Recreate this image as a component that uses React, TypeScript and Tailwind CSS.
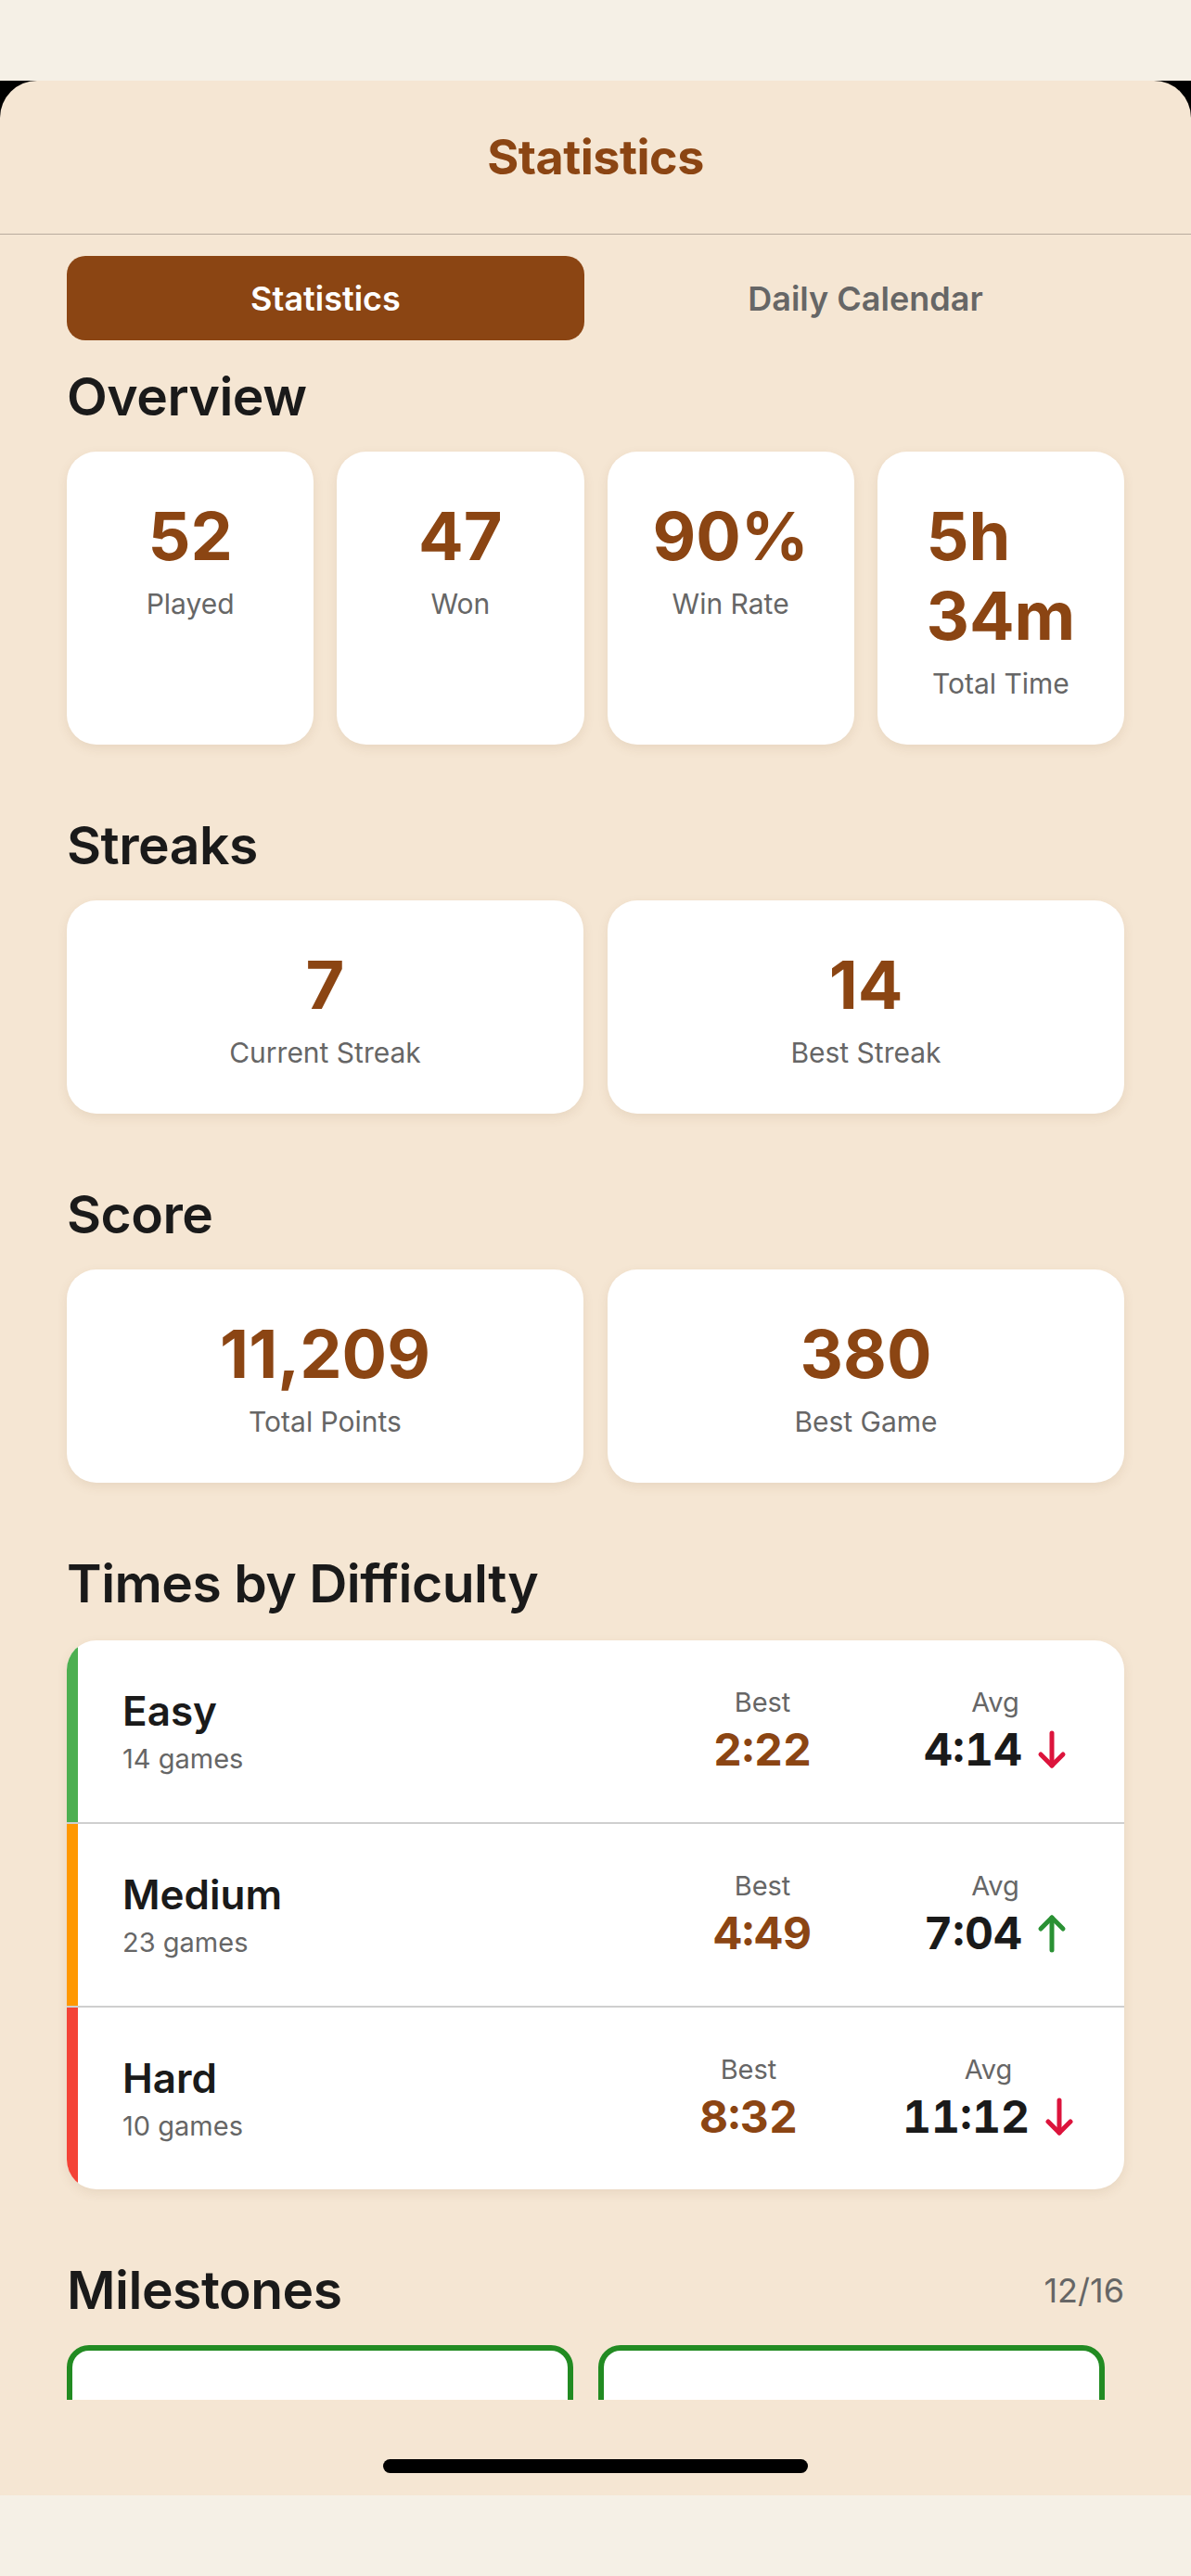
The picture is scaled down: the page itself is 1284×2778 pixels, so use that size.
import type { ReactNode } from 'react'

const overview = [
  { value: '52', label: 'Played' },
  { value: '47', label: 'Won' },
  { value: '90%', label: 'Win Rate' },
  { value: '5h 34m', label: 'Total Time' },
]

const streaks = [
  { value: '7', label: 'Current Streak' },
  { value: '14', label: 'Best Streak' },
]

const score = [
  { value: '11,209', label: 'Total Points' },
  { value: '380', label: 'Best Game' },
]

const difficulties = [
  { name: 'Easy', games: '14 games', best: '2:22', avg: '4:14', trend: 'down', border: 'border-[#4caf50]' },
  { name: 'Medium', games: '23 games', best: '4:49', avg: '7:04', trend: 'up', border: 'border-[#ff9800]' },
  { name: 'Hard', games: '10 games', best: '8:32', avg: '11:12', trend: 'down', border: 'border-[#f44336]' },
]

function Arrow({ up }: { up: boolean }) {
  return (
    <svg
      width="32"
      height="42"
      viewBox="0 0 32 42"
      fill="none"
      stroke={up ? '#2a9134' : '#dc143c'}
      strokeWidth="5"
      strokeLinecap="round"
      strokeLinejoin="round"
      className={up ? 'rotate-180' : ''}
    >
      <path d="M16 3v35" />
      <path d="M4 26l12 12 12-12" />
    </svg>
  )
}

function Heading({ children }: { children: ReactNode }) {
  return <h2 className="text-[57px] leading-[68px] font-semibold text-[#1a1a1a] tracking-[-0.5px]">{children}</h2>
}

function StatCard({ value, label, tall }: { value: string; label: string; tall?: boolean }) {
  return (
    <div className="flex-1 flex flex-col items-center bg-white rounded-[32px] px-6 py-12 shadow-[0_4px_12px_rgba(120,80,40,0.10)]">
      <div className={`text-[72px] leading-[86px] font-bold text-[#8b4513] ${tall ? 'w-min text-left' : 'text-center'}`}>
        {value}
      </div>
      <div className="mt-3 text-[30px] leading-[36px] text-[#666666] text-center">{label}</div>
    </div>
  )
}

export default function App() {
  return (
    <div className="w-[1284px] h-[2778px] flex flex-col bg-[#f5f0e6] font-['Inter',sans-serif]">
      <div className="h-[87px] shrink-0" />
      <div className="bg-black shrink-0">
        <div className="h-[2604px] flex flex-col bg-[#f5e6d3] rounded-t-[40px] overflow-hidden">
          <header className="h-[166px] shrink-0 flex items-center justify-center border-b border-[#b8ab9e]">
            <h1 className="text-[52px] font-bold text-[#8b4513] tracking-[-0.5px]">Statistics</h1>
          </header>

          <main className="h-[2335px] shrink-0 overflow-hidden px-[72px] pt-[23px]">
            <div className="flex gap-6 h-[91px]">
              <button className="flex-1 rounded-[20px] bg-[#8b4513] text-white text-[36px] font-semibold">
                Statistics
              </button>
              <button className="flex-1 rounded-[20px] text-[#666666] text-[36px] font-semibold">
                Daily Calendar
              </button>
            </div>

            <section className="mt-[27px]">
              <Heading>Overview</Heading>
              <div className="mt-[25px] flex gap-[25px]">
                {overview.map((s, i) => (
                  <StatCard key={s.label} value={s.value} label={s.label} tall={i === 3} />
                ))}
              </div>
            </section>

            <section className="mt-[75px]">
              <Heading>Streaks</Heading>
              <div className="mt-[25px] flex gap-[26px]">
                {streaks.map((s) => (
                  <StatCard key={s.label} value={s.value} label={s.label} />
                ))}
              </div>
            </section>

            <section className="mt-[75px]">
              <Heading>Score</Heading>
              <div className="mt-[25px] flex gap-[26px]">
                {score.map((s) => (
                  <StatCard key={s.label} value={s.value} label={s.label} />
                ))}
              </div>
            </section>

            <section className="mt-[75px]">
              <Heading>Times by Difficulty</Heading>
              <div className="mt-[27px] bg-white rounded-[32px] overflow-hidden shadow-[0_4px_12px_rgba(120,80,40,0.10)]">
                {difficulties.map((d, i) => (
                  <div key={d.name}>
                    {i > 0 && <div className="h-[2px] bg-[#cfcfcf]" />}
                    <div className={`flex items-center border-l-[12px] ${d.border} py-[49px] pl-12 pr-[54px]`}>
                      <div className="flex-1">
                        <div className="text-[44px] leading-[53px] font-semibold text-[#1a1a1a]">{d.name}</div>
                        <div className="mt-[7px] text-[29px] leading-[36px] text-[#666666]">{d.games}</div>
                      </div>
                      <div className="flex flex-col items-center">
                        <div className="text-[29px] leading-[36px] text-[#666666]">Best</div>
                        <div className="mt-1 text-[48px] leading-[58px] font-bold tabular-nums text-[#8b4513]">{d.best}</div>
                      </div>
                      <div className="ml-[113px] min-w-[170px] flex flex-col items-center">
                        <div className="text-[29px] leading-[36px] text-[#666666]">Avg</div>
                        <div className="mt-1 flex items-center gap-4">
                          <span className="text-[48px] leading-[58px] font-bold tabular-nums text-[#1a1a1a]">{d.avg}</span>
                          <Arrow up={d.trend === 'up'} />
                        </div>
                      </div>
                    </div>
                  </div>
                ))}
              </div>
            </section>

            <section className="mt-[75px]">
              <div className="flex items-center justify-between">
                <Heading>Milestones</Heading>
                <span className="text-[36px] text-[#666666]">12/16</span>
              </div>
              <div className="mt-[25px] flex gap-[27px]">
                <div className="w-[546px] h-[200px] rounded-[24px] border-[6px] border-[#228b22] bg-white" />
                <div className="w-[546px] h-[200px] rounded-[24px] border-[6px] border-[#228b22] bg-white" />
              </div>
            </section>
          </main>

          <div className="h-[103px] shrink-0 flex justify-center pt-[64px]">
            <div className="w-[458px] h-[15px] rounded-full bg-black" />
          </div>
        </div>
      </div>
      <div className="flex-1" />
    </div>
  )
}
